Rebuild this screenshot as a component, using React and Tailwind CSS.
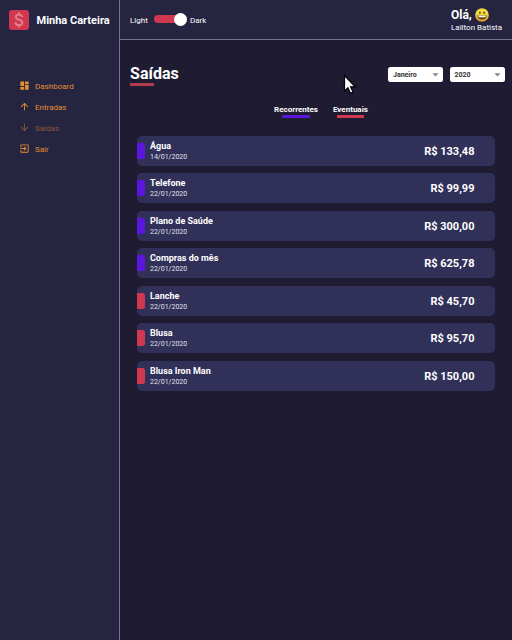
import React from 'react';
import { MdDashboard, MdArrowUpward, MdArrowDownward, MdExitToApp, MdArrowDropDown } from 'react-icons/md';

const menu = [
  { label: 'Dashboard', Icon: MdDashboard },
  { label: 'Entradas', Icon: MdArrowUpward },
  { label: 'Saídas', Icon: MdArrowDownward, active: true },
  { label: 'Sair', Icon: MdExitToApp },
];

const expenses = [
  { name: 'Água', date: '14/01/2020', amount: 'R$ 133,48', recurrent: true },
  { name: 'Telefone', date: '22/01/2020', amount: 'R$ 99,99', recurrent: true },
  { name: 'Plano de Saúde', date: '22/01/2020', amount: 'R$ 300,00', recurrent: true },
  { name: 'Compras do mês', date: '22/01/2020', amount: 'R$ 625,78', recurrent: true },
  { name: 'Lanche', date: '22/01/2020', amount: 'R$ 45,70' },
  { name: 'Blusa', date: '22/01/2020', amount: 'R$ 95,70' },
  { name: 'Blusa Iron Man', date: '22/01/2020', amount: 'R$ 150,00' },
];

function Logo() {
  return (
    <svg className="h-5 w-5 shrink-0" viewBox="0 0 20 20" fill="none">
      <rect width="20" height="20" rx="3" fill="#cf3850" />
      <path
        d="M13.2 7.2C13 5.4 11.7 4.6 10 4.6 8.1 4.6 6.8 5.6 6.8 7.1c0 3.5 6.6 1.8 6.6 5.4 0 1.7-1.4 2.8-3.4 2.8-2.1 0-3.5-1-3.6-3M10 2.5v2.2M10 15.2v2.3"
        stroke="#e67f8c"
        strokeWidth="1.9"
      />
    </svg>
  );
}

function Grin() {
  return (
    <svg className="h-3.5 w-3.5 shrink-0" viewBox="0 0 14 14">
      <defs>
        <linearGradient id="face" x1="0" y1="0" x2="0" y2="1">
          <stop offset="0.4" stopColor="#f3dc3c" />
          <stop offset="1" stopColor="#dd9a2b" />
        </linearGradient>
      </defs>
      <circle cx="7" cy="7" r="6.8" fill="url(#face)" />
      <ellipse cx="4.9" cy="4.7" rx="0.8" ry="1.3" fill="#5b401c" />
      <ellipse cx="9.1" cy="4.7" rx="0.8" ry="1.3" fill="#5b401c" />
      <path d="M2.2 7.2h9.6c0 3-2.1 4.4-4.8 4.4s-4.8-1.4-4.8-4.4z" fill="#6b4519" />
      <path d="M2.9 7.5h8.2c-.2 1-.6 1.6-1 1.8H3.9c-.5-.3-.9-.9-1-1.8z" fill="#fff6dc" />
    </svg>
  );
}

function Select({ value }) {
  return (
    <div className="flex h-[15px] w-[55px] items-center justify-between rounded-[2.5px] bg-white pl-[5px] text-[7px] font-bold text-[#333]">
      <span className="pt-px">{value}</span>
      <MdArrowDropDown className="h-[15px] w-[15px] text-[#888]" />
    </div>
  );
}

function Sidebar() {
  return (
    <aside className="w-[120px] shrink-0 border-r border-[#777389] bg-[#252441]">
      <div className="flex h-10 items-center gap-[7.5px] pl-[9px]">
        <Logo />
        <span className="whitespace-nowrap text-[11px] font-bold leading-none">Minha Carteira</span>
      </div>
      <nav className="mt-[35px] flex flex-col pl-[19px]">
        {menu.map(({ label, Icon, active }) => (
          <a
            key={label}
            className={`flex h-[21px] items-center gap-[5px] text-[8px] text-[#e68f31] ${active ? 'opacity-50' : ''}`}
          >
            <Icon className="h-[11px] w-[11px]" />
            <span className="pt-[2px]">{label}</span>
          </a>
        ))}
      </nav>
    </aside>
  );
}

function Header() {
  return (
    <header className="flex h-10 items-center justify-between border-b border-[#777389] bg-[#252441] pl-2.5 pr-[9.5px]">
      <div className="flex items-center pb-px text-[8px]">
        <span className="w-6 pt-[3px]">Light</span>
        <div className="flex h-[13px] w-[33px] items-center">
          <div className="flex h-2 w-[33px] items-center justify-end rounded-full bg-[#cf3850]">
            <div className="h-[13px] w-[13px] rounded-full bg-white" />
          </div>
        </div>
        <span className="pl-[3px] pt-[3px]">Dark</span>
      </div>
      <div className="w-[51.5px] whitespace-nowrap pt-0.5">
        <div className="flex h-[13px] items-center gap-[3px] text-xs font-bold">
          <span>Olá,</span>
          <Grin />
        </div>
        <div className="h-3 text-[8px] leading-[13px]">Lailton Batista</div>
      </div>
    </header>
  );
}

export default function App() {
  return (
    <div className="relative flex h-[640px] w-[512px] overflow-hidden bg-[#1e1b32] font-['Roboto',sans-serif] text-white">
      <Sidebar />
      <div className="flex min-w-0 flex-1 flex-col">
        <Header />
        <main className="flex-1">
          <div className="flex justify-between pl-2.5 pr-[7.5px] pt-[25px]">
            <div>
              <h1 className="h-[17.5px] text-[16px] font-bold leading-[18px] tracking-[0.05px]">Saídas</h1>
              <div className="h-[3px] w-6 bg-[#b53b52]" />
            </div>
            <div className="flex gap-[6.5px] pt-0.5">
              <Select value="Janeiro" />
              <Select value="2020" />
            </div>
          </div>
          <div className="mt-[18.5px] flex justify-center gap-[15px] pl-[10px] text-[8px] font-bold leading-[11px]">
            <div className="flex flex-col items-center">
              <span>Recorrentes</span>
              <div className="h-[3px] w-7 rounded-[1px] bg-[#5b16de]" />
            </div>
            <div className="flex flex-col items-center">
              <span>Eventuais</span>
              <div className="h-[3px] w-[27px] bg-[#cf3850]" />
            </div>
          </div>
          <ul className="ml-[17.4px] mr-[17.5px] mt-[17.5px] flex flex-col gap-[7.5px]">
            {expenses.map((item) => (
              <li key={item.name} className="flex h-[30px] items-center rounded-[5px] bg-[#313059] pr-5">
                <div className={`h-4 w-[7.3px] rounded-r-[2.5px] ${item.recurrent ? 'bg-[#5b16de]' : 'bg-[#cf3850]'}`} />
                <div className="flex-1 pl-[5.3px] pt-[1.2px]">
                  <div className="text-[9px] font-bold leading-[11px]">{item.name}</div>
                  <div className="text-[7px] leading-[10px] text-[#e2e1ea]">{item.date}</div>
                </div>
                <span className="pt-[3px] text-[11px] font-bold">{item.amount}</span>
              </li>
            ))}
          </ul>
        </main>
      </div>
      <svg className="absolute left-[343px] top-[73.5px] h-[21px] w-3.5" viewBox="0 0 14 21">
        <path d="M1.5 1.5v15.5l3.5-3.2 2.4 5.5 2.6-1.2-2.4-5.3h4.6z" fill="#fff" stroke="#000" strokeWidth="1.2" />
      </svg>
    </div>
  );
}
